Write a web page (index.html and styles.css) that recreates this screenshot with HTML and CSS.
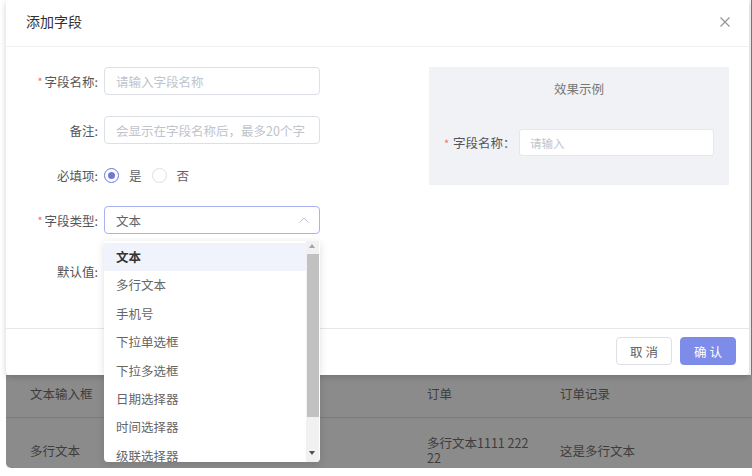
FILE: index.html
```html
<!DOCTYPE html>
<html lang="zh-CN">
<head>
<meta charset="utf-8">
<title>添加字段</title>
<link rel="stylesheet" href="styles.css">
</head>
<body>
<div class="page">
  <div class="top">
    <div class="modal">
      <div class="header">
        <span class="title">添加字段</span>
        <svg class="close" width="10" height="10" viewBox="0 0 10 10"><path d="M0.5 0.5L9.5 9.5M9.5 0.5L0.5 9.5" stroke="#909399" stroke-width="1.1" fill="none"/></svg>
      </div>
      <div class="body">
        <div class="form">
          <div class="item item1">
            <label class="label"><span class="req">*</span>字段名称:</label>
            <div class="input"><span class="ph">请输入字段名称</span></div>
          </div>
          <div class="item item2">
            <label class="label">备注:</label>
            <div class="input"><span class="ph">会显示在字段名称后，最多20个字</span></div>
          </div>
          <div class="item item3">
            <label class="label">必填项:</label>
            <div class="radios">
              <span class="radio on"></span><span class="rtext">是</span>
              <span class="radio"></span><span class="rtext">否</span>
            </div>
          </div>
          <div class="item item4">
            <label class="label"><span class="req">*</span>字段类型:</label>
            <div class="input select"><span class="val">文本</span>
              <svg class="chev" width="10" height="6" viewBox="0 0 10 6"><path d="M0.5 5.5L5 1L9.5 5.5" stroke="#c0c4cc" stroke-width="1" fill="none"/></svg>
            </div>
          </div>
          <div class="item item5">
            <label class="label">默认值:</label>
          </div>
        </div>
        <div class="preview">
          <div class="ptitle">效果示例</div>
          <div class="prow">
            <span class="preq">*</span>
            <span class="plabel">字段名称：</span>
            <div class="pinput"><span class="pph">请输入</span></div>
          </div>
        </div>
      </div>
      <div class="footer">
        <button class="btn cancel">取 消</button>
        <button class="btn ok">确 认</button>
      </div>
    </div>
    <div class="edge"></div>
  </div>
  <div class="table">
    <div class="row r1">
      <div class="cell">文本输入框</div>
      <div class="cell">订单</div>
      <div class="cell">订单记录</div>
    </div>
    <div class="row r2">
      <div class="cell">多行文本</div>
      <div class="cell wrap">多行文本1111 222 22</div>
      <div class="cell">这是多行文本</div>
    </div>
  </div>

  <div class="dropdown">
    <ul class="list">
      <li class="opt active">文本</li>
      <li class="opt">多行文本</li>
      <li class="opt">手机号</li>
      <li class="opt">下拉单选框</li>
      <li class="opt">下拉多选框</li>
      <li class="opt">日期选择器</li>
      <li class="opt">时间选择器</li>
      <li class="opt">级联选择器</li>
    </ul>
    <div class="sbar">
      <span class="arr up"></span>
      <span class="thumb"></span>
      <span class="arr down"></span>
    </div>
  </div>
</div>
</body>
</html>
```
FILE: styles.css
```css
* { box-sizing: border-box; }
html, body { margin: 0; padding: 0; background: #fff; }
body {
  font-family: "Noto Sans CJK SC", "Noto Sans", sans-serif;
  font-size: 12.5px;
  color: #606266;
}
.page {
  position: relative;
  margin-left: 6px;
  width: 746px;
}
.top { display: flex; height: 375px; }
.modal {
  width: 743px;
  height: 375px;
  background: #fff;
  border-radius: 0 0 4px 4px;
  box-shadow: 0 2px 6px rgba(0,0,0,0.18);
  display: flex;
  flex-direction: column;
  position: relative;
  z-index: 1;
}
.edge {
  flex: 1;
  border-right: 1px solid #7a7a7a;
  background: #f6f6f6;
}
.header {
  height: 47px;
  border-bottom: 1px solid #eef0f3;
  display: flex;
  align-items: center;
  justify-content: space-between;
  padding: 0 19px 4px 20px;
}
.title { font-size: 14px; color: #303133; }
.close { display: block; margin-top: 2px; }

.body {
  height: 281px;
  display: flex;
  padding-top: 20px;
}
.form { width: 314px; display: flex; flex-direction: column; }
.item { display: flex; align-items: center; height: 28px; }
.item1 { margin-bottom: 21px; }
.item2 { margin-bottom: 17px; }
.item3 { margin-bottom: 17px; }
.item4 { margin-bottom: 23px; }
.label {
  width: 92px;
  text-align: right;
  margin-right: 6px;
  color: #555;
  white-space: nowrap;
}
.req { color: #f56c6c; margin-right: 2px; font-size: 11px; position: relative; top: -1px; }
.input {
  width: 216px;
  height: 28px;
  border: 1px solid #dcdfe6;
  border-radius: 4px;
  padding: 0 11px;
  display: flex;
  align-items: center;
  overflow: hidden;
  white-space: nowrap;
}
.ph { color: #c0c4cc; }
.select { border-color: #a9b1ef; justify-content: space-between; padding-right: 10px; }
.val { color: #606266; }
.chev { display: block; }
.radios { display: flex; align-items: center; }
.radio {
  width: 15px; height: 15px;
  border: 1px solid #dcdfe6;
  border-radius: 50%;
  display: flex; align-items: center; justify-content: center;
}
.radio.on { border-color: #6b79d9; }
.radio.on::after {
  content: ""; width: 7px; height: 7px; border-radius: 50%; background: #6b79d9;
}
.rtext { color: #606266; margin: 0 10px 0 10px; }

.preview {
  margin-left: 109px;
  width: 300px;
  height: 118px;
  background: #f0f2f5;
  padding: 12px 15px 0 15px;
}
.ptitle { text-align: center; color: #777; line-height: 20px; font-size: 12.5px; }
.prow { display: flex; align-items: center; margin-top: 30px; }
.preq { color: #f56c6c; font-size: 11px; width: 9px; }
.plabel { color: #555; width: 66px; }
.pinput {
  width: 195px; height: 27px;
  background: #fff;
  border: 1px solid #e4e7ed;
  border-radius: 3px;
  display: flex; align-items: center;
  padding-left: 10px;
}
.pph { color: #c0c4cc; font-size: 11.5px; }

.footer {
  height: 47px;
  border-top: 1px solid #e6e6e6;
  display: flex;
  justify-content: flex-end;
  align-items: flex-start;
  gap: 8px;
  padding: 8px 13px 0 0;
}
.btn {
  width: 56px; height: 28px;
  border-radius: 4px;
  font-family: inherit;
  font-size: 12.5px;
  padding: 0;
}
.cancel { background: #fff; border: 1px solid #dcdfe6; color: #606266; }
.ok { background: #7d8ce8; border: 1px solid #7d8ce8; color: #fff; }

.table {
  background: #8b8b8b;
  height: 93px;
  overflow: hidden;
  border-bottom-left-radius: 5px;
  color: #3d3d3d;
}
.row {
  display: grid;
  grid-template-columns: 397px 133px 1fr;
  padding-left: 24px;
  align-items: center;
}
.r1 { height: 43px; border-bottom: 1px solid #7b7b7b; padding-bottom: 6px; }
.r2 { height: 64px; }
.wrap { width: 108px; line-height: 15px; }

.dropdown {
  position: absolute;
  left: 98px;
  top: 241px;
  width: 216px;
  height: 221px;
  background: #fff;
  border-radius: 0 0 4px 4px;
  box-shadow: 0 2px 8px rgba(0,0,0,0.12);
  overflow: hidden;
  z-index: 5;
}
.list { list-style: none; margin: 0; padding: 2px 14px 0 0; }
.opt {
  height: 28.4px;
  line-height: 28.4px;
  padding-left: 12px;
  color: #666;
  white-space: nowrap;
}
.opt.active { background: #f0f3fb; color: #333; font-weight: bold; }
.sbar {
  position: absolute;
  right: 1px; top: 0; bottom: 0;
  width: 13px;
  background: #f1f1f1;
}
.thumb {
  position: absolute;
  left: 1px; right: 0;
  top: 13px; height: 163px;
  background: #c1c1c1;
}
.arr {
  position: absolute;
  left: 3px;
  width: 0; height: 0;
  border-left: 3.5px solid transparent;
  border-right: 3.5px solid transparent;
}
.arr.up { top: 3px; border-bottom: 4px solid #a3a3a3; }
.arr.down { bottom: 7px; border-top: 4px solid #505050; }
```
